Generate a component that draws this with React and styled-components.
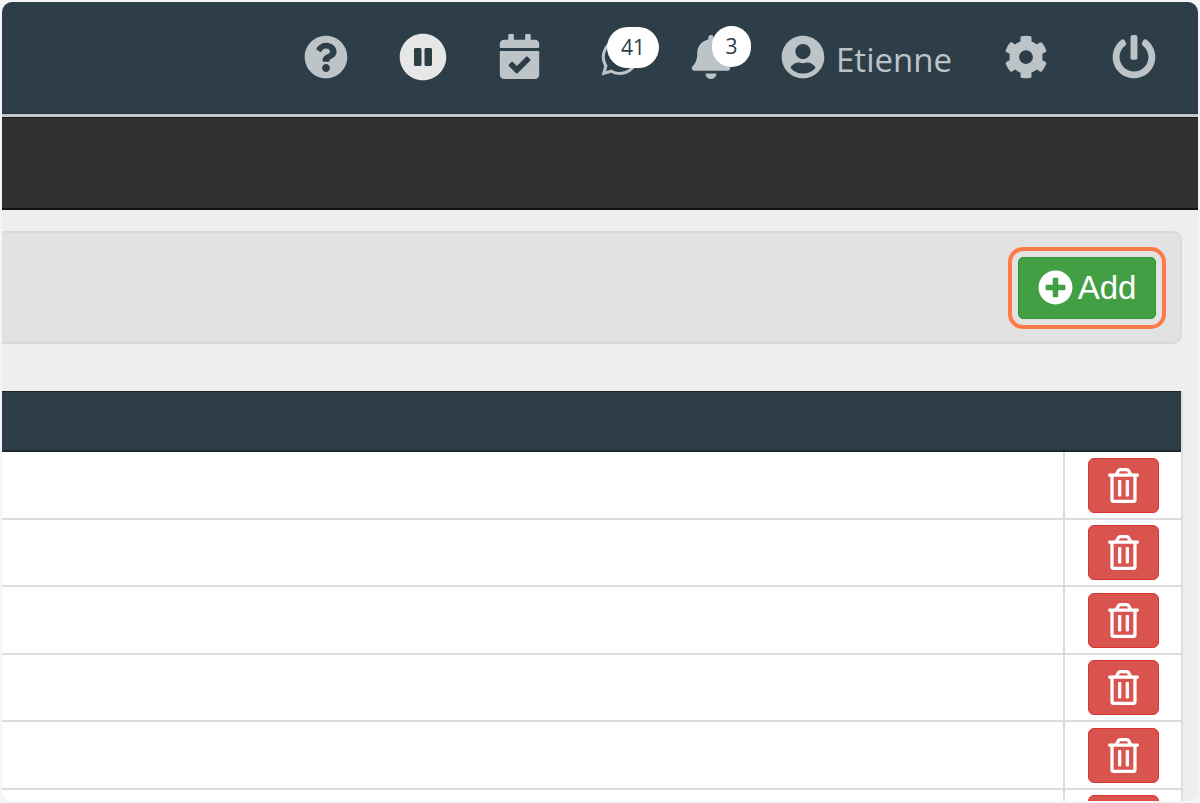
import React from 'react';
import styled, { createGlobalStyle } from 'styled-components';
import {
  FaQuestionCircle,
  FaPauseCircle,
  FaCalendarCheck,
  FaWhatsapp,
  FaBell,
  FaUserCircle,
  FaCog,
  FaPowerOff,
  FaPlusCircle,
  FaRegTrashAlt,
} from 'react-icons/fa';

const GlobalStyle = createGlobalStyle`
  html, body {
    margin: 0;
    height: 100%;
    overflow: hidden;
    background: #f4f4f9;
  }
  #root {
    height: 100%;
  }
  * {
    box-sizing: border-box;
  }
`;

const Frame = styled.div`
  height: 799px;
  margin: 2px 2px 0;
  border-radius: 10px;
  overflow: hidden;
  background: #eeeeee;
  font-family: 'Open Sans', sans-serif;
`;

const NavBar = styled.header`
  display: flex;
  align-items: center;
  justify-content: flex-end;
  height: 112px;
  padding: 0 42px 2px 0;
  background: #2d3e49;
  color: #bdc4c8;
  border-bottom: 1px solid #22303a;
`;

const NavItem = styled.div`
  position: relative;
  display: flex;
  align-items: center;
  margin-left: ${({ $gap }) => $gap}px;
  font-size: ${({ $size }) => $size}px;
  color: ${({ $light }) => ($light ? '#e6e6e6' : '#bdc4c8')};
`;

const Badge = styled.span`
  position: absolute;
  top: -9px;
  left: ${({ $left }) => $left}px;
  display: flex;
  align-items: center;
  justify-content: center;
  width: ${({ $width }) => $width}px;
  height: 41px;
  border-radius: 21px;
  background: #fff;
  color: #2d3e49;
  font-size: 21px;
`;

const UserName = styled.span`
  margin: 5px 0 0 11px;
  font-size: 33px;
  line-height: 1;
`;

const NavRule = styled.div`
  height: 3px;
  background: #c2c6c8;
`;

const SubBar = styled.div`
  height: 93px;
  background: #303030;
  border-top: 1px solid #1a1a1a;
  border-bottom: 2px solid #111;
`;

const Content = styled.main`
  padding: 21px 16px 0 0;
`;

const ActionPanel = styled.section`
  display: flex;
  align-items: center;
  justify-content: flex-end;
  height: 113px;
  padding-right: 24px;
  background: #e2e2e2;
  border: 2px solid #d9d9d9;
  border-left: 0;
  border-radius: 0 9px 9px 0;
`;

const AddButton = styled.button`
  display: flex;
  align-items: center;
  justify-content: center;
  gap: 5px;
  width: 138px;
  height: 62px;
  padding: 0;
  border: 1px solid #2f962f;
  border-radius: 5px;
  outline: 4px solid #ff7849;
  outline-offset: 6px;
  background: #439f43;
  color: #fff;
  font-family: 'Liberation Sans', Arial, sans-serif;
  font-size: 33px;
`;

const Table = styled.section`
  margin-top: 47px;
  margin-right: -1px;
  border-right: 2px solid #dddddd;
`;

const TableHead = styled.div`
  height: 61px;
  background: #2d3e49;
  border-top: 1px solid #1b2830;
  border-bottom: 2px solid #1b2830;
`;

const MainCell = styled.div`
  flex: 1;
`;

const ActionCell = styled.div`
  display: flex;
  justify-content: flex-start;
  width: 118px;
  padding: 5.5px 0 0 23px;
  border-left: 2px solid #dddddd;
`;

const Row = styled.div`
  display: flex;
  height: 67.5px;
  background: #fff;
  border-bottom: 2px solid #dddddd;

  &:first-of-type {
    height: 70px;
  }

  &:first-of-type ${ActionCell} {
    padding-top: 7px;
  }
`;

const DeleteButton = styled.button`
  display: flex;
  align-items: center;
  justify-content: center;
  width: 71px;
  height: 55px;
  padding: 0;
  border: 1px solid #d9352f;
  border-radius: 6px;
  background: #d9534f;
  color: #fff;
  font-size: 35px;
`;

const rows = [0, 1, 2, 3, 4, 5];

export default function App() {
  return (
    <>
      <GlobalStyle />
      <Frame>
        <NavBar>
          <NavItem $size={44}>
            <FaQuestionCircle />
          </NavItem>
          <NavItem $gap={51} $size={48} $light>
            <FaPauseCircle />
          </NavItem>
          <NavItem $gap={50} $size={45}>
            <FaCalendarCheck />
          </NavItem>
          <NavItem $gap={57} $size={42}>
            <FaWhatsapp />
            <Badge $left={8} $width={52}>41</Badge>
          </NavItem>
          <NavItem $gap={48} $size={44}>
            <FaBell />
            <Badge $left={23} $width={39}>3</Badge>
          </NavItem>
          <NavItem $gap={48} $size={44}>
            <FaUserCircle />
            <UserName>Etienne</UserName>
          </NavItem>
          <NavItem $gap={52} $size={44}>
            <FaCog />
          </NavItem>
          <NavItem $gap={64} $size={44}>
            <FaPowerOff />
          </NavItem>
        </NavBar>
        <NavRule />
        <SubBar />
        <Content>
          <ActionPanel>
            <AddButton>
              <FaPlusCircle size={35} />
              Add
            </AddButton>
          </ActionPanel>
          <Table>
            <TableHead />
            {rows.map(id => (
              <Row key={id}>
                <MainCell />
                <ActionCell>
                  <DeleteButton>
                    <FaRegTrashAlt />
                  </DeleteButton>
                </ActionCell>
              </Row>
            ))}
          </Table>
        </Content>
      </Frame>
    </>
  );
}
